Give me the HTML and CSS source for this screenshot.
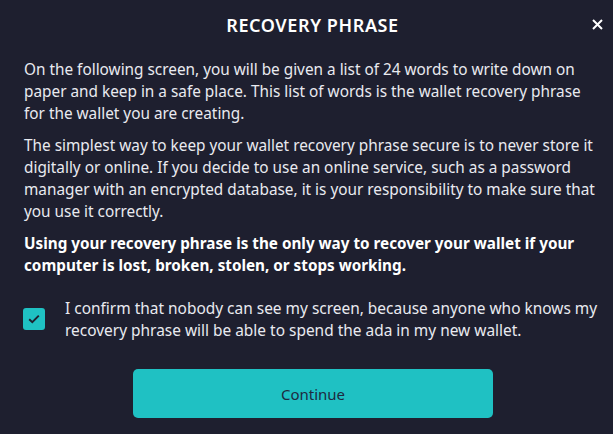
FILE: index.html
```html
<!DOCTYPE html>
<html lang="en">
<head>
    <meta charset="UTF-8">
    <title>Recovery phrase</title>
    <link rel="stylesheet" href="styles.css">
</head>
<body>
    <div class="dialog">
        <header class="dialog-header">
            <h1>Recovery phrase</h1>
            <button class="close" type="button" aria-label="Close">
                <svg width="11" height="11" viewBox="0 0 11 11"><path d="M1 1L10 10M10 1L1 10" stroke="#fff" stroke-width="2"/></svg>
            </button>
        </header>

        <div class="dialog-body">
            <p>On the following screen, you will be given a list of 24 words to write down on paper and keep in a safe place. This list of words is the wallet recovery phrase for the wallet you are creating.</p>
            <p>The simplest way to keep your wallet recovery phrase secure is to never store it digitally or online. If you decide to use an online service, such as a password manager with an encrypted database, it is your responsibility to make sure that you use it correctly.</p>
            <p class="strong">Using your recovery phrase is the only way to recover your wallet if your computer is lost, broken, stolen, or stops working.</p>

            <label class="confirm">
                <span class="checkbox">
                    <svg width="12" height="10" viewBox="0 0 12 10"><path d="M1.2 5.2L4.3 8.2L10.8 1.6" fill="none" stroke="#1e1f2f" stroke-width="1.9"/></svg>
                </span>
                <span>I confirm that nobody can see my screen, because anyone who knows my recovery phrase will be able to spend the ada in my new wallet.</span>
            </label>

            <button class="continue" type="button">Continue</button>
        </div>
    </div>
</body>
</html>
```

FILE: styles.css
```css
body {
    margin: 0;
    background-color: #1e1f2f;
    color: #e9eaf0;
    font-family: "Noto Sans", "Open Sans", sans-serif;
}

.dialog {
    width: 613px;
    height: 434px;
    box-sizing: border-box;
}

.dialog-header {
    position: relative;
    height: 50px;
    padding-left: 12px;
    display: flex;
    align-items: center;
    justify-content: center;
}

.dialog-header h1 {
    margin: 0;
    font-size: 18px;
    font-weight: 600;
    text-transform: uppercase;
    color: #fff;
    letter-spacing: 0.6px;
}

.close {
    position: absolute;
    right: 10px;
    top: 19px;
    background: none;
    border: none;
    padding: 0;
    width: 11px;
    height: 11px;
    display: flex;
    cursor: pointer;
}

.dialog-body {
    padding: 8px 12px 0 24px;
}

.dialog-body p {
    margin: 0 0 10px;
    font-size: 15.35px;
    line-height: 22px;
}

.dialog-body p.strong {
    font-size: 15.25px;
    font-weight: 700;
    color: #fff;
}

.confirm {
    display: flex;
    align-items: center;
    gap: 20px;
    margin: 21px 0 0 -1px;
    font-size: 15.45px;
    line-height: 22px;
}

.checkbox {
    flex: none;
    width: 22px;
    height: 22px;
    border-radius: 3px;
    background-color: #1fc1c3;
    display: flex;
    align-items: center;
    justify-content: center;
}

.continue {
    display: block;
    margin: 28px 0 0 109px;
    width: 360px;
    height: 49px;
    border: none;
    border-radius: 5px;
    background-color: #1fc1c3;
    color: #1e2a40;
    font-family: inherit;
    font-size: 15px;
    cursor: pointer;
}
```
